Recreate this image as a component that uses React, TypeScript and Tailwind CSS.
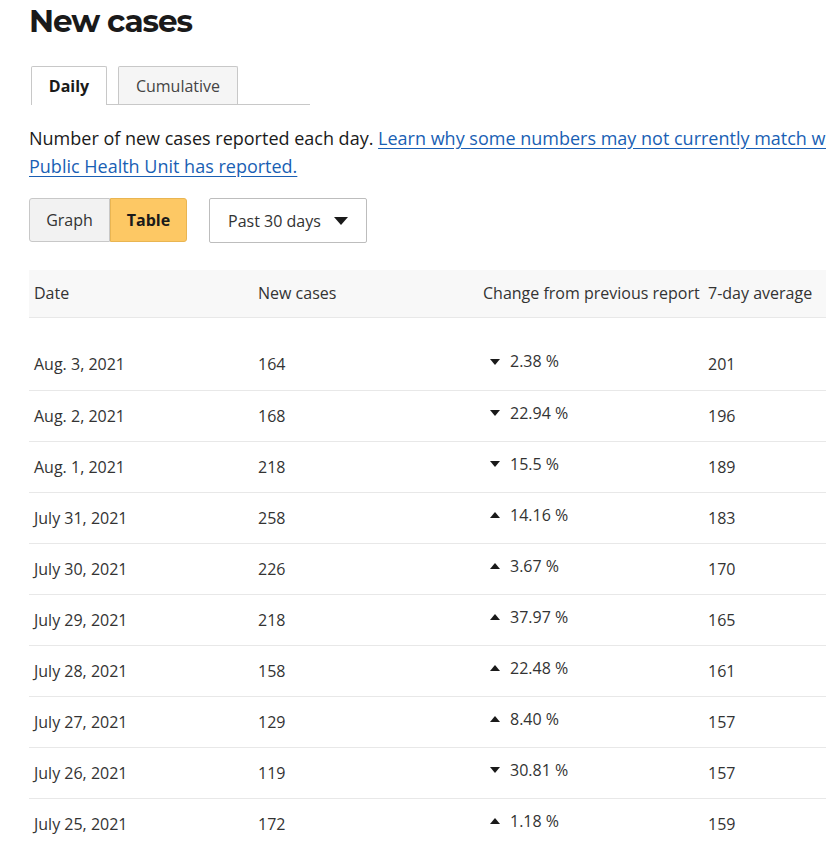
import React from 'react'

type Row = { date: string; cases: number; dir: 'up' | 'down'; change: string; avg: number }

const ROWS: Row[] = [
  { date: 'Aug. 3, 2021', cases: 164, dir: 'down', change: '2.38 %', avg: 201 },
  { date: 'Aug. 2, 2021', cases: 168, dir: 'down', change: '22.94 %', avg: 196 },
  { date: 'Aug. 1, 2021', cases: 218, dir: 'down', change: '15.5 %', avg: 189 },
  { date: 'July 31, 2021', cases: 258, dir: 'up', change: '14.16 %', avg: 183 },
  { date: 'July 30, 2021', cases: 226, dir: 'up', change: '3.67 %', avg: 170 },
  { date: 'July 29, 2021', cases: 218, dir: 'up', change: '37.97 %', avg: 165 },
  { date: 'July 28, 2021', cases: 158, dir: 'up', change: '22.48 %', avg: 161 },
  { date: 'July 27, 2021', cases: 129, dir: 'up', change: '8.40 %', avg: 157 },
  { date: 'July 26, 2021', cases: 119, dir: 'down', change: '30.81 %', avg: 157 },
  { date: 'July 25, 2021', cases: 172, dir: 'up', change: '1.18 %', avg: 159 },
]

function Triangle({ dir }: { dir: 'up' | 'down' }) {
  return (
    <svg width="10" height="6" viewBox="0 0 10 6" className="shrink-0">
      {dir === 'down' ? <path d="M0 0h10L5 6z" fill="#1a1a1a" /> : <path d="M0 6h10L5 0z" fill="#1a1a1a" />}
    </svg>
  )
}

export default function App() {
  return (
    <div className="w-[826px] h-[848px] overflow-hidden bg-white font-['Open_Sans',sans-serif] text-[#1a1a1a]">
      <div className="w-[960px] pl-[29px]">
        {/* title */}
        <h1 className="font-['Montserrat','Open_Sans',sans-serif] text-[31px] leading-[42px] font-bold tracking-[-1px] text-[#1a1a1a]">
          New cases
        </h1>

        {/* tabs */}
        <div className="mt-[24px] ml-[2px] w-[279px] flex gap-[11px] border-b border-[#c8c8c8]">
          <button className="-mb-px w-[76px] h-[39px] bg-white border border-b-0 border-[#c8c8c8] rounded-t-[2px] text-[16px] font-bold text-[#1a1a1a]">
            Daily
          </button>
          <button className="w-[120px] h-[38px] bg-[#f5f5f5] border border-b-0 border-[#c8c8c8] rounded-t-[2px] text-[16px] text-[#444]">
            Cumulative
          </button>
        </div>

        {/* description */}
        <p className="mt-[19px] w-[930px] text-[18px] leading-[28px] text-[#1a1a1a]">
          Number of new cases reported each day.{' '}
          <a href="#" className="text-[#1a5fb4] underline underline-offset-[3px]">
            Learn why some numbers may not currently match what your local Public Health Unit has reported.
          </a>
        </p>

        {/* controls */}
        <div className="mt-[16px] flex items-center">
          <div className="flex">
            <button className="w-[81px] h-[44px] bg-[#f2f2f2] border border-[#c8c8c8] rounded-l-[3px] text-[16px] text-[#333]">
              Graph
            </button>
            <button className="w-[77px] h-[44px] bg-[#fdc864] border border-[#e9b552] rounded-r-[3px] text-[16px] font-bold text-[#1a1a1a]">
              Table
            </button>
          </div>
          <button className="ml-[22px] mt-[2px] w-[158px] h-[45px] pl-[18px] pr-[18px] flex items-center justify-between bg-white border border-[#bdbdbd] rounded-[2px] text-[16px] text-[#333]">
            <span>Past 30 days</span>
            <svg width="14" height="8" viewBox="0 0 14 8">
              <path d="M0 0h14L7 8z" fill="#1a1a1a" />
            </svg>
          </button>
        </div>

        {/* table */}
        <table className="mt-[27px] w-[900px] table-fixed border-collapse text-[16px] text-[#333]">
          <thead>
            <tr className="h-[47px] bg-[#f8f8f8] border-b border-[#e8e8e8]">
              <th className="w-[225px] pl-[5px] text-left font-normal">Date</th>
              <th className="w-[225px] pl-[4px] text-left font-normal">New cases</th>
              <th className="w-[225px] pl-[4px] text-left font-normal">Change from previous report</th>
              <th className="w-[225px] pl-[4px] text-left font-normal">7-day average</th>
            </tr>
          </thead>
          <tbody>
            <tr className="h-[22px]">
              <td colSpan={4} />
            </tr>
            {ROWS.map((r) => (
              <tr key={r.date} className="h-[51px] border-b border-[#e8e8e8]">
                <td className="pl-[5px]">{r.date}</td>
                <td className="pl-[4px]">{r.cases}</td>
                <td className="pl-[11px]">
                  <div className="flex items-center gap-[10px] -mt-[5px]">
                    <Triangle dir={r.dir} />
                    <span className="-mt-[1px]">{r.change}</span>
                  </div>
                </td>
                <td className="pl-[4px]">{r.avg}</td>
              </tr>
            ))}
          </tbody>
        </table>
      </div>
    </div>
  )
}
